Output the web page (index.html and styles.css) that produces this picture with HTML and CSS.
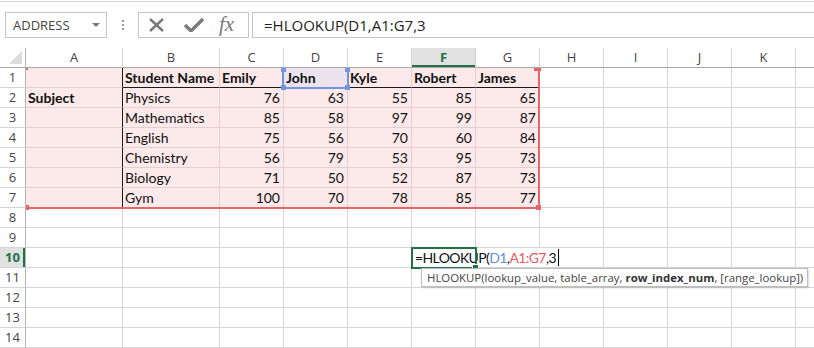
FILE: index.html
```html
<!DOCTYPE html>
<html lang="en">
<head>
    <meta charset="UTF-8">
    <title>HLOOKUP - Sheet1</title>
    <link rel="stylesheet" href="styles.css">
</head>
<body>
    <div class="toolbar">
        <div class="namebox">
            <span>ADDRESS</span>
            <span class="drop"></span>
        </div>
        <div class="grip"></div>
        <div class="fxbox">
            <svg class="ico" width="15" height="14" viewBox="0 0 15 14">
                <path d="M1 1 L14 13 M14 1 L1 13" stroke="#7a7a7a" stroke-width="2.4" fill="none"/>
            </svg>
            <svg class="ico" width="20" height="14" viewBox="0 0 20 14">
                <path d="M1 7 L7 13 L19 1" stroke="#7a7a7a" stroke-width="3.4" fill="none"/>
            </svg>
            <span class="fx">fx</span>
        </div>
        <div class="formula">=HLOOKUP(D1,A1:G7,3</div>
    </div>

    <div class="sheet">
        <table class="grid">
            <colgroup>
                <col class="c-rh"><col class="c-wide"><col class="c-wide">
                <col class="c-std"><col class="c-std"><col class="c-std"><col class="c-std"><col class="c-std">
                <col class="c-std"><col class="c-std"><col class="c-std"><col class="c-std">
                <col class="c-rest">
            </colgroup>
            <tr class="heads">
                <th class="corner"><span class="tri"></span></th>
                <th>A</th><th>B</th><th>C</th><th>D</th><th>E</th><th class="on">F</th><th>G</th>
                <th>H</th><th>I</th><th>J</th><th>K</th><th class="last"></th>
            </tr>
            <tr>
                <th class="rh">1</th>
                <td class="hl vb"></td>
                <td class="hl b hb">Student Name</td>
                <td class="hl b hb">Emily</td>
                <td class="hl b hb sel">John</td>
                <td class="hl b hb">Kyle</td>
                <td class="hl b hb">Robert</td>
                <td class="hl b hb">James</td>
                <td></td><td></td><td></td><td></td><td class="last"></td>
            </tr>
            <tr>
                <th class="rh">2</th>
                <td class="hl vb b">Subject</td>
                <td class="hl">Physics</td>
                <td class="hl n">76</td><td class="hl n">63</td><td class="hl n">55</td><td class="hl n">85</td><td class="hl n">65</td>
                <td></td><td></td><td></td><td></td><td class="last"></td>
            </tr>
            <tr>
                <th class="rh">3</th>
                <td class="hl vb"></td>
                <td class="hl">Mathematics</td>
                <td class="hl n">85</td><td class="hl n">58</td><td class="hl n">97</td><td class="hl n">99</td><td class="hl n">87</td>
                <td></td><td></td><td></td><td></td><td class="last"></td>
            </tr>
            <tr>
                <th class="rh">4</th>
                <td class="hl vb"></td>
                <td class="hl">English</td>
                <td class="hl n">75</td><td class="hl n">56</td><td class="hl n">70</td><td class="hl n">60</td><td class="hl n">84</td>
                <td></td><td></td><td></td><td></td><td class="last"></td>
            </tr>
            <tr>
                <th class="rh">5</th>
                <td class="hl vb"></td>
                <td class="hl">Chemistry</td>
                <td class="hl n">56</td><td class="hl n">79</td><td class="hl n">53</td><td class="hl n">95</td><td class="hl n">73</td>
                <td></td><td></td><td></td><td></td><td class="last"></td>
            </tr>
            <tr>
                <th class="rh">6</th>
                <td class="hl vb"></td>
                <td class="hl">Biology</td>
                <td class="hl n">71</td><td class="hl n">50</td><td class="hl n">52</td><td class="hl n">87</td><td class="hl n">73</td>
                <td></td><td></td><td></td><td></td><td class="last"></td>
            </tr>
            <tr>
                <th class="rh">7</th>
                <td class="hl vb"></td>
                <td class="hl">Gym</td>
                <td class="hl n">100</td><td class="hl n">70</td><td class="hl n">78</td><td class="hl n">85</td><td class="hl n">77</td>
                <td></td><td></td><td></td><td></td><td class="last"></td>
            </tr>
            <tr>
                <th class="rh">8</th>
                <td></td><td></td><td></td><td></td><td></td><td></td><td></td><td></td><td></td><td></td><td></td><td class="last"></td>
            </tr>
            <tr>
                <th class="rh">9</th>
                <td></td><td></td><td></td><td></td><td></td><td></td><td></td><td></td><td></td><td></td><td></td><td class="last"></td>
            </tr>
            <tr>
                <th class="rh on">10</th>
                <td></td><td></td><td></td><td></td><td></td>
                <td class="entry-cell nogrid">
                    <div class="entry">=HLOOKUP(<span class="ref-d">D1</span>,<span class="ref-a">A1:G7</span>,3<span class="caret"></span></div>
                </td>
                <td class="nogrid"></td>
                <td></td><td></td><td></td><td></td><td class="last"></td>
            </tr>
            <tr>
                <th class="rh">11</th>
                <td></td><td></td><td></td><td></td><td></td><td></td><td></td><td></td><td></td><td></td><td></td><td class="last"></td>
            </tr>
            <tr>
                <th class="rh">12</th>
                <td></td><td></td><td></td><td></td><td></td><td></td><td></td><td></td><td></td><td></td><td></td><td class="last"></td>
            </tr>
            <tr>
                <th class="rh">13</th>
                <td></td><td></td><td></td><td></td><td></td><td></td><td></td><td></td><td></td><td></td><td></td><td class="last"></td>
            </tr>
            <tr>
                <th class="rh">14</th>
                <td></td><td></td><td></td><td></td><td></td><td></td><td></td><td></td><td></td><td></td><td></td><td class="last"></td>
            </tr>
        </table>

        <!-- range highlight A1:G7 -->
        <div class="range">
            <span class="h tr"></span>
            <span class="h br"></span>
            <span class="h bl"></span>
            <span class="h tl"></span>
        </div>

        <!-- reference D1 -->
        <div class="ref-box">
            <span class="h tl"></span>
            <span class="h tr"></span>
            <span class="h bl"></span>
            <span class="h br"></span>
        </div>

        <!-- active cell F10 -->
        <div class="active"><span class="fill"></span></div>

        <div class="tip">HLOOKUP(lookup_value, table_array, <b>row_index_num</b>, [range_lookup])</div>
    </div>
</body>
</html>
```

FILE: styles.css
```css
body {
    margin: 0;
    font-family: "Open Sans", sans-serif;
    background-color: #fff;
    color: #222;
    overflow: hidden;
}

/* formula bar */
.toolbar {
    margin-top: 1px;
    height: 47px;
    box-sizing: border-box;
    border-top: 1px solid #d6d6d6;
    padding: 10px 0 0 5px;
    display: flex;
    align-items: flex-start;
}

.namebox {
    width: 102px;
    height: 26px;
    box-sizing: border-box;
    border: 1px solid #c6c6c6;
    display: flex;
    align-items: center;
    justify-content: space-between;
    padding: 0 6px 0 7px;
    font-size: 13px;
    color: #444;
}

.drop {
    width: 0;
    height: 0;
    border-left: 4px solid transparent;
    border-right: 4px solid transparent;
    border-top: 4px solid #7a7a7a;
}

.grip {
    width: 31px;
    height: 26px;
    display: flex;
    justify-content: center;
    align-items: center;
}

.grip::before {
    content: "";
    width: 2px;
    height: 12px;
    background: radial-gradient(circle, #9a9a9a 45%, transparent 55%) 0 0 / 2px 4px repeat-y;
}

.fxbox {
    width: 111px;
    height: 26px;
    box-sizing: border-box;
    border: 1px solid #c6c6c6;
    display: flex;
    align-items: center;
    padding-left: 10px;
}

.fxbox .ico {
    margin-right: 20px;
}

.fxbox .ico + .ico {
    margin-right: 15px;
}

.fx {
    font-family: "Liberation Serif", serif;
    font-style: italic;
    font-size: 21px;
    line-height: 20px;
    color: #7a7a7a;
    margin-top: -2px;
}

.formula {
    flex: 1;
    margin-left: 3px;
    height: 26px;
    box-sizing: border-box;
    border: 1px solid #c6c6c6;
    border-right: none;
    padding-left: 11px;
    font-size: 15px;
    line-height: 24px;
    color: #222;
}

/* sheet */
.sheet {
    position: relative;
}

.grid {
    border-collapse: separate;
    border-spacing: 0;
    table-layout: fixed;
    width: 814px;
}

.c-rh { width: 26px; }
.c-wide { width: 97px; }
.c-std { width: 64px; }
.c-rest { width: 18px; }

.grid th,
.grid td {
    height: 19px;
    padding: 0 3px 0 2px;
    border-right: 1px solid #d4d4d4;
    border-bottom: 1px solid #d4d4d4;
    white-space: nowrap;
    overflow: hidden;
    line-height: 19px;
}

.grid th {
    font-family: "Open Sans", sans-serif;
    font-weight: normal;
    font-size: 13px;
    color: #444;
    text-align: center;
    padding: 0;
}

.heads th {
    border-bottom-color: #a6a6a6;
}

.grid th.rh {
    border-right-color: #b4b4b4;
}

.grid .on {
    background-color: #e1e1e1;
    color: #217346;
    font-weight: bold;
}

.heads .on {
    box-shadow: inset 0 -2px 0 #217346;
}

.rh.on {
    box-shadow: inset -2px 0 0 #217346;
}

.corner {
    position: relative;
    border-right-color: #b4b4b4 !important;
}

.tri {
    position: absolute;
    right: 3px;
    bottom: 3px;
    width: 0;
    height: 0;
    border-left: 13px solid transparent;
    border-bottom: 13px solid #dcdcdc;
}

.grid td {
    font-family: Lato, "Liberation Sans", sans-serif;
    font-size: 14px;
    color: #111;
}

.grid .last {
    border-right: none;
}

.grid td.hl {
    background-color: #fce9ea;
    border-color: #e3cfd0;
}

.grid td.b {
    font-weight: bold;
}

.grid td.n {
    text-align: right;
}

.grid td.vb {
    border-right-color: #1a1a1a;
}

.grid td.hb {
    border-bottom-color: #1a1a1a;
}

.grid td.sel {
    background-color: #ece3ee;
}

.grid td.nogrid {
    border-right-color: transparent;
}

.grid td.entry-cell {
    overflow: visible;
    padding: 0 0 0 3px;
}

.entry {
    white-space: nowrap;
    font-size: 14px;
    letter-spacing: -0.6px;
}

.ref-d { color: #5f8fe3; }
.ref-a { color: #e65a5e; }

.caret {
    display: inline-block;
    width: 1px;
    height: 17px;
    margin-left: 2px;
    background-color: #000;
    vertical-align: -3px;
}

/* overlays */
.range {
    position: absolute;
    left: 26px;
    top: 20px;
    width: 514px;
    height: 141px;
    box-sizing: border-box;
    border-right: 2px solid #e86567;
    border-bottom: 2px solid #e86567;
    pointer-events: none;
}

.range .h,
.ref-box .h {
    position: absolute;
    width: 5px;
    height: 5px;
    background-color: #e86567;
}

.range .tr { right: -3px; top: 0; width: 7px; height: 3px; }
.range .br { right: -3px; bottom: -3px; }
.range .bl { left: 0; bottom: -3px; width: 3px; }
.range .tl { left: 0; top: 0; width: 2px; height: 2px; }

.ref-box {
    position: absolute;
    left: 282px;
    top: 19px;
    width: 67px;
    height: 22px;
    box-sizing: border-box;
    border: 2px solid #7295e0;
    border-top-color: transparent;
}

.ref-box .h { background-color: #7295e0; }
.ref-box .tl { left: -3px; top: -1px; height: 4px; }
.ref-box .tr { right: -3px; top: -1px; height: 4px; }
.ref-box .bl { left: -3px; bottom: -3px; }
.ref-box .br { right: -3px; bottom: -3px; }

.active {
    position: absolute;
    left: 411px;
    top: 199px;
    width: 66px;
    height: 22px;
    box-sizing: border-box;
    border: 2px solid #217346;
}

.fill {
    position: absolute;
    right: -4px;
    bottom: -4px;
    width: 5px;
    height: 5px;
    background-color: #217346;
    border: 1px solid #fff;
}

.tip {
    position: absolute;
    left: 421px;
    top: 220px;
    width: 387px;
    height: 19px;
    box-sizing: border-box;
    padding-left: 5px;
    background-color: #fff;
    border: 1px solid #bdbdbd;
    box-shadow: 1px 1px 2px rgba(0, 0, 0, 0.15);
    font-size: 11.4px;
    line-height: 17px;
    color: #444;
    white-space: nowrap;
    overflow: hidden;
}

.tip b {
    color: #333;
}
```
